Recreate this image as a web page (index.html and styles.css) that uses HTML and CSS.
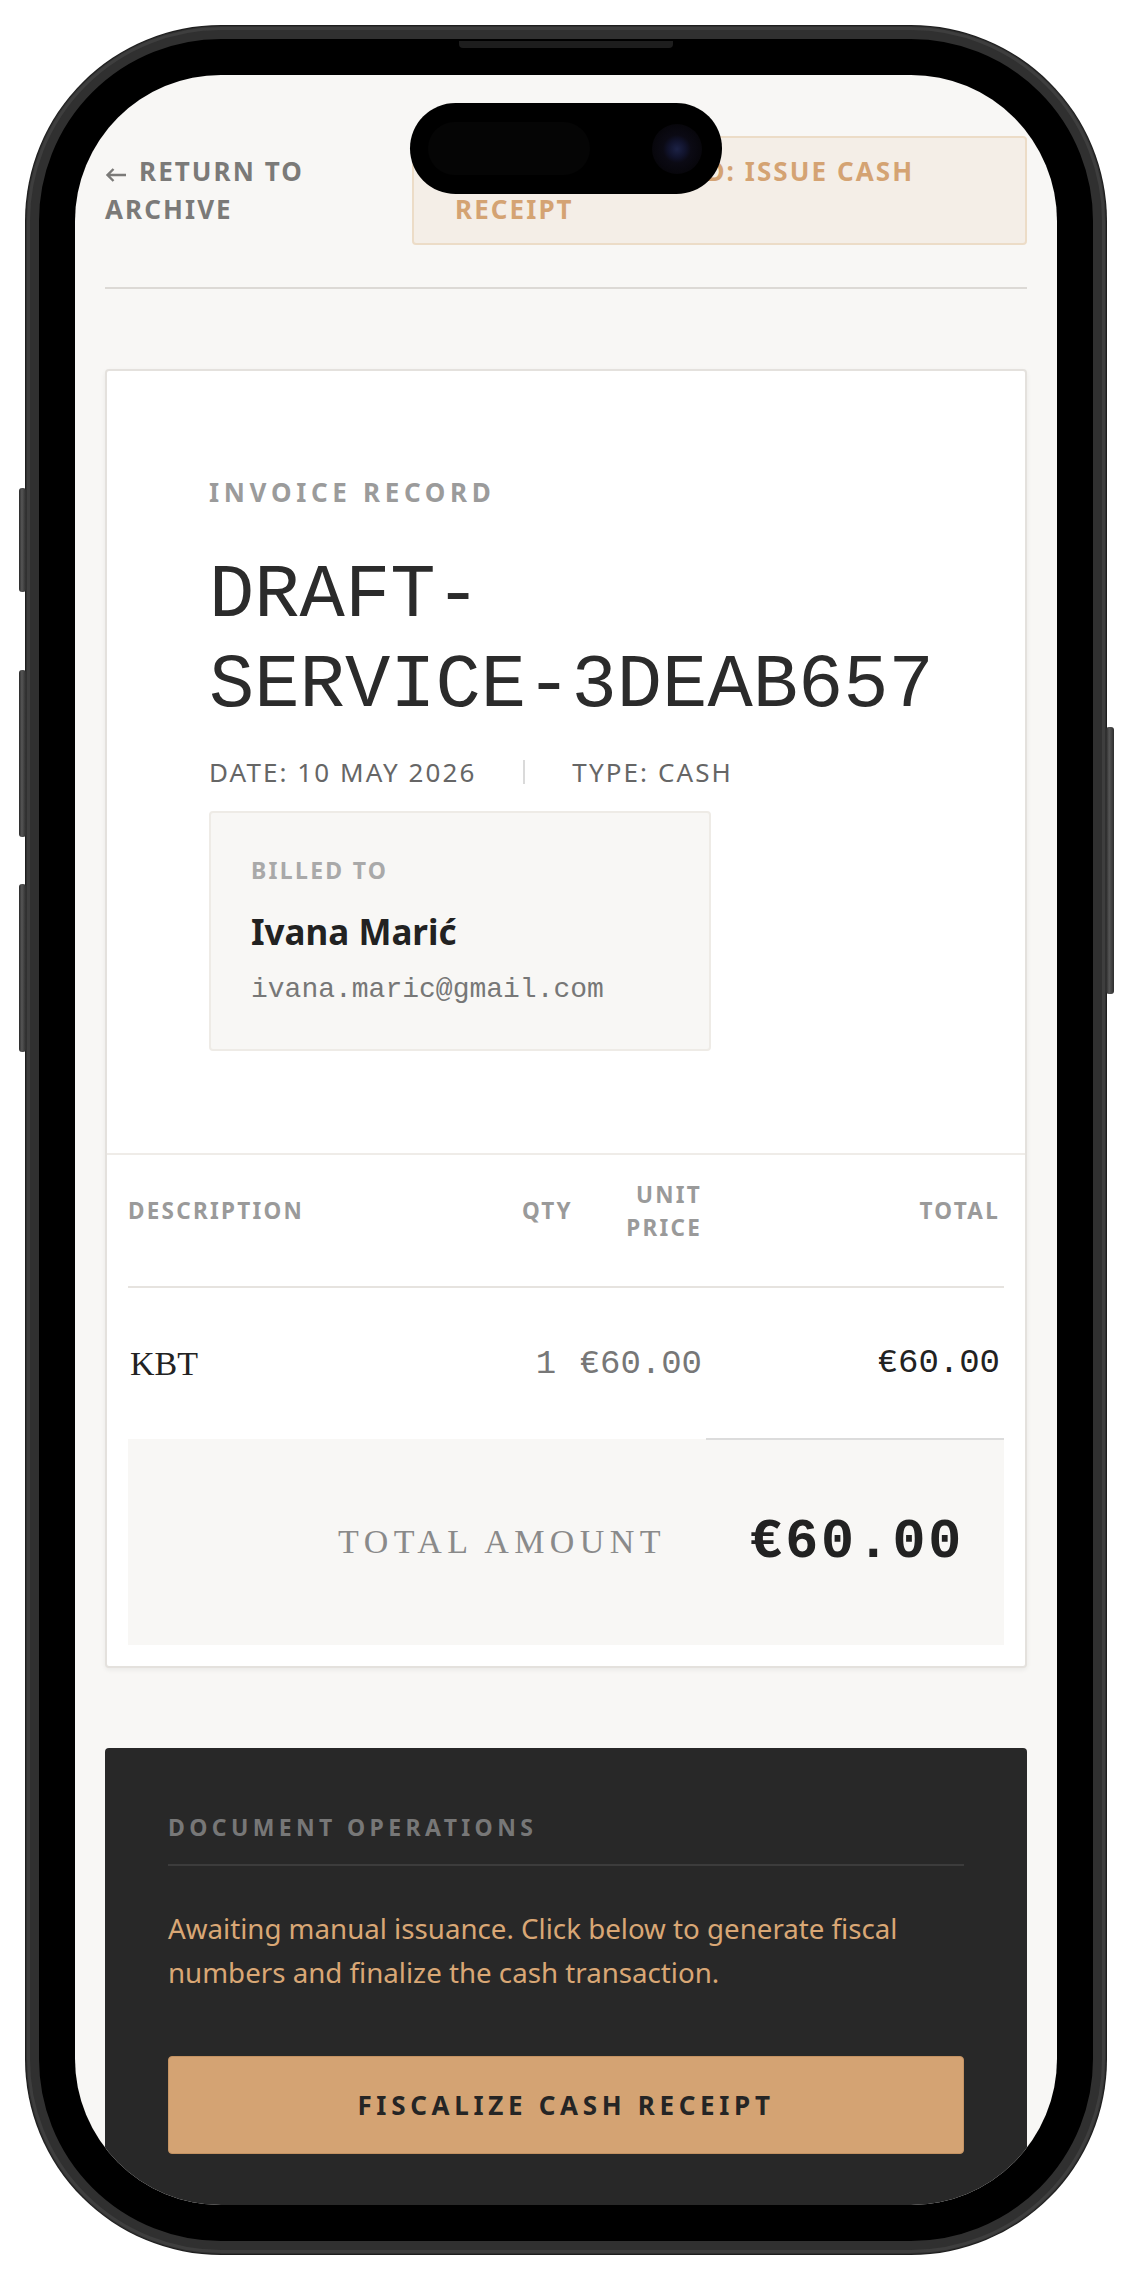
FILE: index.html
```html
<!DOCTYPE html>
<html lang="en">
<head>
  <meta charset="utf-8">
  <title>Invoice DRAFT-SERVICE-3DEAB657</title>
  <meta name="viewport" content="width=device-width, initial-scale=1">
  <link rel="stylesheet" href="styles.css">
</head>
<body>
  <div class="stage">
    <div class="phone">
      <span class="side-btn side-action"></span>
      <span class="side-btn side-vol-up"></span>
      <span class="side-btn side-vol-down"></span>
      <span class="side-btn side-power"></span>
      <span class="speaker"></span>

      <div class="screen">
        <div class="island">
          <span class="island-sensor"></span>
          <span class="island-lens"></span>
        </div>

        <main class="page">
          <header class="topbar">
            <a class="back" href="#"><svg class="arrow" width="22" height="14" viewBox="0 0 22 14" aria-hidden="true"><path d="M21 7H2.5M8.5 1 2.5 7l6 6" fill="none" stroke="currentColor" stroke-width="2.4"/></svg>Return to archive</a>
            <a class="action" href="#">Action required: issue cash receipt</a>
          </header>

          <section class="invoice">
            <div class="invoice-head">
              <div class="eyebrow">Invoice record</div>
              <h1 class="doc-number">DRAFT-<span class="nowrap">SERVICE-3DEAB657</span></h1>
              <div class="meta">
                <span>Date: 10 May 2026</span>
                <span class="meta-sep"></span>
                <span>Type: Cash</span>
              </div>
              <div class="billed">
                <div class="billed-label">Billed to</div>
                <div class="billed-name">Ivana Marić</div>
                <div class="billed-email">ivana.maric@gmail.com</div>
              </div>
            </div>

            <div class="lines">
              <table>
                <colgroup>
                  <col>
                  <col class="c-qty">
                  <col class="c-unit">
                  <col class="c-total">
                </colgroup>
                <thead>
                  <tr>
                    <th class="desc">Description</th>
                    <th class="qty">Qty</th>
                    <th class="num">Unit price</th>
                    <th class="num">Total</th>
                  </tr>
                </thead>
                <tbody>
                  <tr>
                    <td class="desc">KBT</td>
                    <td class="qty mono muted">1</td>
                    <td class="num mono muted">€60.00</td>
                    <td class="num mono">€60.00</td>
                  </tr>
                </tbody>
                <tfoot>
                  <tr>
                    <td class="sum-label" colspan="3">Total amount</td>
                    <td class="sum-value">€60.00</td>
                  </tr>
                </tfoot>
              </table>
            </div>
          </section>

          <section class="ops">
            <h2>Document operations</h2>
            <p>Awaiting manual issuance. Click below to generate fiscal numbers and finalize the cash transaction.</p>
            <button type="button" class="ops-btn">Fiscalize cash receipt</button>
          </section>
        </main>
      </div>
    </div>
  </div>
</body>
</html>
```

FILE: styles.css
```css
html, body {
  margin: 0;
  background-color: #ffffff;
}
body {
  font-family: "Noto Sans", "Open Sans", sans-serif;
  color: #222222;
}

/* device frame */
.stage {
  padding: 26px;
}
.phone {
  position: relative;
  width: 1080px;
  height: 2228px;
  box-sizing: border-box;
  padding: 36px;
  border: 13px solid #303030;
  border-radius: 195px;
  background: #000000;
  box-shadow: 0 0 0 1px #1e1e1e;
}
.phone::before {
  content: "";
  position: absolute;
  inset: -12px;
  border: 3px solid #3e3e3e;
  border-radius: 194px;
  pointer-events: none;
}
.side-btn {
  position: absolute;
  width: 7px;
  border-radius: 3px;
  background: linear-gradient(90deg, #2a2a2a, #555555 40%, #2e2e2e);
}
.side-action { left: -20px; top: 449px; height: 104px; }
.side-vol-up { left: -20px; top: 631px; height: 167px; }
.side-vol-down { left: -20px; top: 845px; height: 168px; }
.side-power { right: -21px; top: 688px; height: 267px; width: 8px; }
.speaker {
  position: absolute;
  top: 2px;
  left: 420px;
  width: 214px;
  height: 7px;
  border-radius: 0 0 4px 4px;
  background: #1d1d1d;
}

.screen {
  position: relative;
  height: 100%;
  overflow: hidden;
  border-radius: 146px;
  background: #f8f7f5;
}
.island {
  position: absolute;
  top: 28px;
  left: 335px;
  width: 312px;
  height: 91px;
  border-radius: 46px;
  background: #000000;
  z-index: 5;
}
.island-sensor {
  position: absolute;
  top: 19px;
  left: 18px;
  width: 162px;
  height: 53px;
  border-radius: 27px;
  background: #050505;
}
.island-lens {
  position: absolute;
  top: 21px;
  left: 242px;
  width: 50px;
  height: 50px;
  border-radius: 50%;
  background: radial-gradient(circle, #1c2246 0, #10122a 9px, #0b0a14 14px, #07060b 25px);
}

/* page */
.page {
  padding: 61px 30px 0;
}
.topbar {
  display: flex;
  align-items: center;
  justify-content: space-between;
  padding-bottom: 42px;
  border-bottom: 2px solid #dcd9d5;
}
.back {
  max-width: 270px;
  font-size: 26px;
  line-height: 37.5px;
  font-weight: 700;
  letter-spacing: 0.08em;
  text-transform: uppercase;
  text-decoration: none;
  color: #7b7a78;
}
.arrow {
  margin-right: 12px;
  vertical-align: -1px;
}
.action {
  width: 615px;
  box-sizing: border-box;
  padding: 15px 41px;
  border: 2px solid #ecdcc7;
  border-radius: 4px;
  background: #f4eee7;
  font-size: 26px;
  line-height: 37.5px;
  font-weight: 700;
  letter-spacing: 0.08em;
  text-transform: uppercase;
  text-decoration: none;
  color: #d4a373;
}

.invoice {
  margin-top: 80px;
  background: #ffffff;
  border: 2px solid #e4e1dd;
  border-radius: 4px;
  box-shadow: 0 2px 5px rgba(0, 0, 0, 0.06);
}
.invoice-head {
  padding: 104px 80px 102px 102px;
  border-bottom: 2px solid #efece8;
}
.eyebrow {
  font-size: 26px;
  line-height: 34px;
  font-weight: 700;
  letter-spacing: 0.18em;
  text-transform: uppercase;
  color: #9b9b9b;
}
.doc-number {
  margin: 42px 0 0;
  font-family: "Liberation Mono", "Courier New", monospace;
  font-size: 75.5px;
  line-height: 90px;
  font-weight: 400;
  color: #2b2b2b;
}
.nowrap {
  white-space: nowrap;
}
.meta {
  display: flex;
  align-items: center;
  gap: 47px;
  margin-top: 24px;
  font-size: 26px;
  line-height: 34px;
  letter-spacing: 0.08em;
  text-transform: uppercase;
  color: #666666;
}
.meta-sep {
  width: 2px;
  height: 24px;
  background: #dadada;
}
.billed {
  width: 502px;
  box-sizing: border-box;
  margin-top: 22px;
  padding: 42px 40px 40px;
  border: 2px solid #eeebe6;
  border-radius: 4px;
  background: #f8f7f5;
}
.billed-label {
  font-size: 23px;
  line-height: 31px;
  font-weight: 700;
  letter-spacing: 0.1em;
  text-transform: uppercase;
  color: #a9a9a9;
}
.billed-name {
  margin-top: 23px;
  font-size: 35px;
  line-height: 45.5px;
  font-weight: 700;
  color: #222222;
}
.billed-email {
  margin-top: 15px;
  font-family: "Liberation Mono", "Courier New", monospace;
  font-size: 28px;
  line-height: 39px;
  color: #777777;
}

/* line items */
.lines {
  padding: 0 21px 21px;
}
.lines table {
  width: 100%;
  border-collapse: collapse;
  table-layout: fixed;
}
.c-qty { width: 56px; }
.c-unit { width: 132px; }
.c-total { width: 298px; }
.lines th {
  padding: 23px 4px 41px;
  font-size: 22.5px;
  line-height: 33.75px;
  font-weight: 700;
  letter-spacing: 0.1em;
  text-transform: uppercase;
  color: #9a9a9a;
  vertical-align: middle;
  border-bottom: 2px solid #e6e3df;
}
.lines td {
  padding: 56px 4px;
  vertical-align: middle;
}
.lines .desc {
  padding-left: 0;
  text-align: left;
}
.lines td.desc {
  padding-left: 2px;
  font-family: "Liberation Serif", "Times New Roman", serif;
  font-size: 34px;
  color: #222222;
}
.lines .qty { text-align: center; }
.lines .num { text-align: right; }
.mono {
  font-family: "Liberation Mono", "Courier New", monospace;
  font-size: 34px;
  color: #222222;
}
.mono.muted { color: #777777; }

.lines tfoot td {
  padding: 71px 40px;
  background: #f8f7f5;
}
.sum-label {
  text-align: right;
  font-family: "Liberation Serif", "Times New Roman", serif;
  font-size: 34px;
  letter-spacing: 0.16em;
  text-transform: uppercase;
  color: #8a8a8a;
}
.lines tfoot .sum-value {
  border-top: 2px solid #dcdcdc;
  text-align: right;
  font-family: "Liberation Mono", "Courier New", monospace;
  font-size: 55px;
  font-weight: 700;
  letter-spacing: 0.05em;
  color: #222222;
}

/* operations panel */
.ops {
  margin-top: 80px;
  padding: 64px 63px 120px;
  border-radius: 4px;
  background: #282828;
}
.ops h2 {
  margin: 0;
  padding-bottom: 21px;
  border-bottom: 2px solid #3c3c3c;
  font-size: 23px;
  line-height: 31px;
  font-weight: 700;
  letter-spacing: 0.19em;
  text-transform: uppercase;
  color: #777777;
}
.ops p {
  margin: 40px 0 0;
  font-size: 27.7px;
  line-height: 44.3px;
  color: #d9a775;
}
.ops-btn {
  display: block;
  width: 100%;
  height: 98px;
  margin-top: 61px;
  border: 1px solid #c39262;
  border-radius: 4px;
  background: #d4a373;
  font-family: "Noto Sans", "Open Sans", sans-serif;
  font-size: 26px;
  font-weight: 700;
  letter-spacing: 0.18em;
  text-transform: uppercase;
  color: #252525;
  cursor: pointer;
}
```
